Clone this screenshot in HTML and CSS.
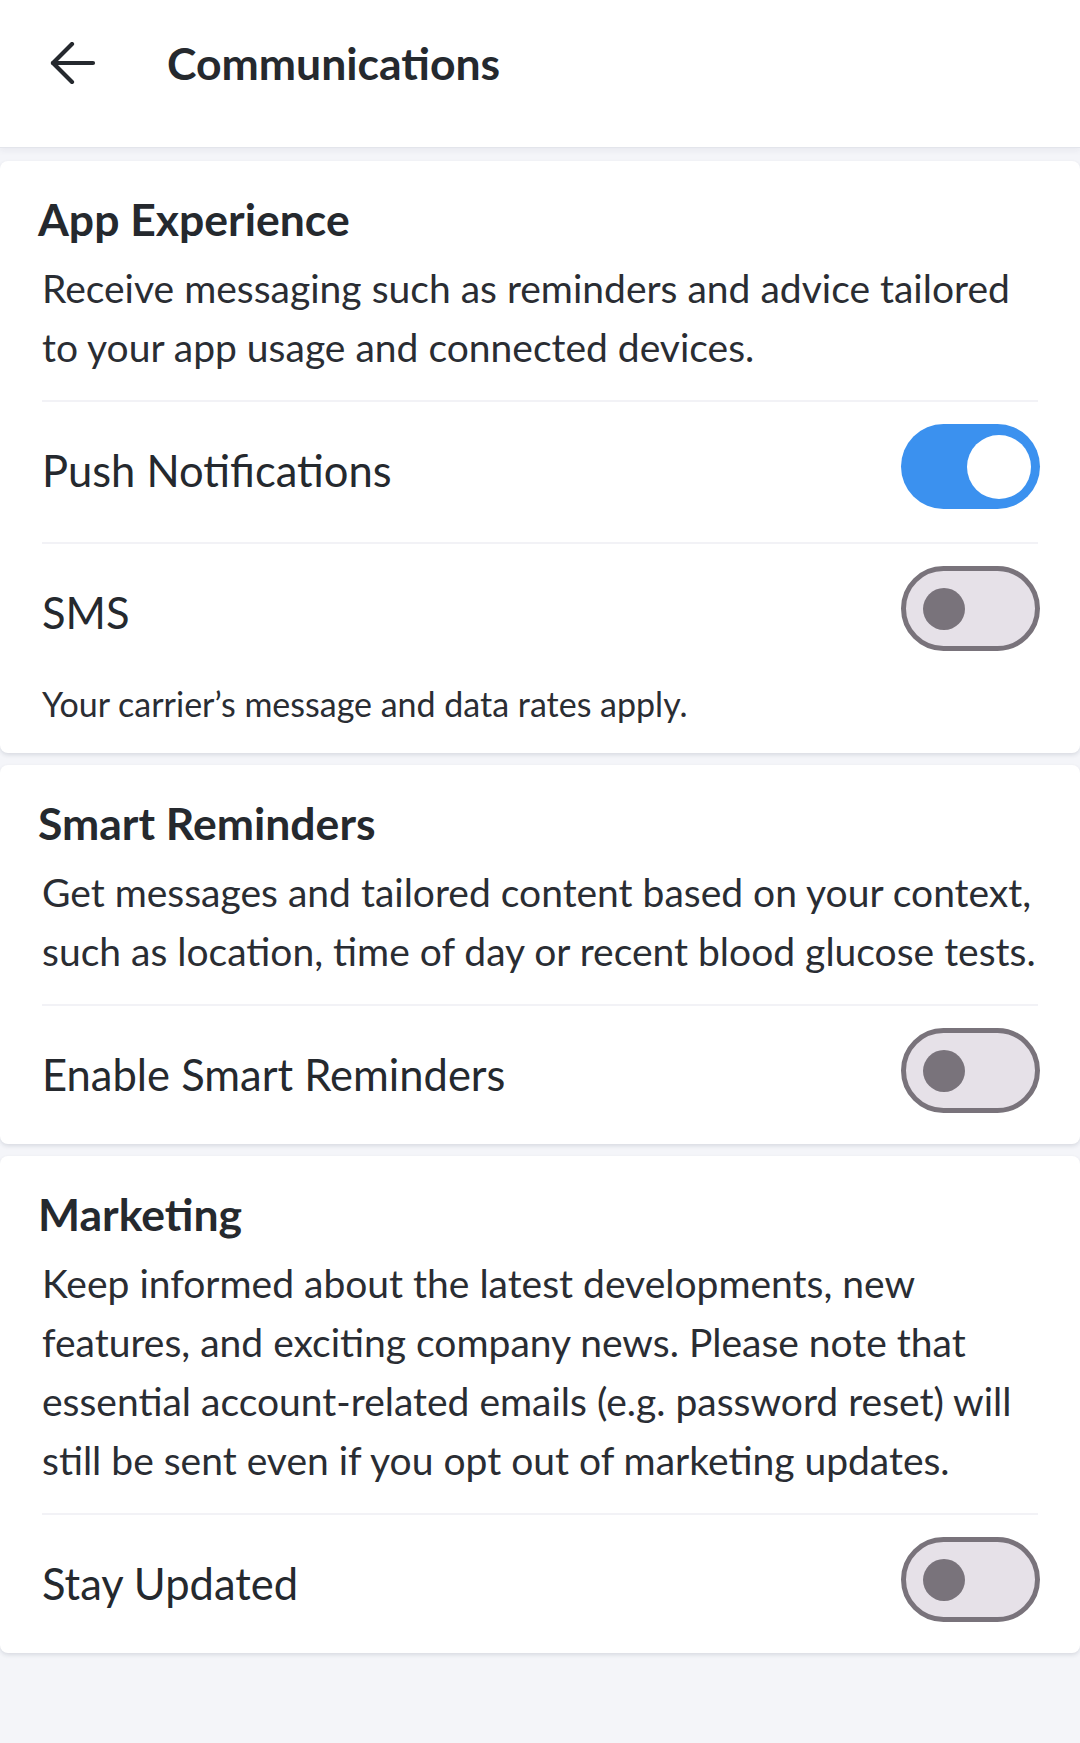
FILE: index.html
```html
<!DOCTYPE html>
<html lang="en">
<head>
<meta charset="utf-8">
<title>Communications</title>
<link rel="stylesheet" href="styles.css">
</head>
<body>
<header class="topbar">
  <button class="back" aria-label="Back">
    <svg width="46" height="42" viewBox="0 0 46 42" fill="none" stroke="currentColor" stroke-width="4.2" stroke-linecap="round" stroke-linejoin="round">
      <path d="M43 21H3"/>
      <path d="M22 2L3 21l19 19"/>
    </svg>
  </button>
  <h1 class="title">Communications</h1>
</header>
<main class="content">
  <section class="card">
    <h2 class="card-title">App Experience</h2>
    <p class="card-desc">Receive messaging such as reminders and advice tailored to your app usage and connected devices.</p>
    <div class="row">
      <span class="row-label">Push Notifications</span>
      <span class="toggle on"><span class="knob"></span></span>
    </div>
    <div class="row">
      <span class="row-label">SMS</span>
      <span class="toggle"><span class="knob"></span></span>
    </div>
    <p class="note">Your carrier’s message and data rates apply.</p>
  </section>
  <section class="card">
    <h2 class="card-title">Smart Reminders</h2>
    <p class="card-desc">Get messages and tailored content based on your context, such as location, time of day or recent blood glucose tests.</p>
    <div class="row last">
      <span class="row-label">Enable Smart Reminders</span>
      <span class="toggle"><span class="knob"></span></span>
    </div>
  </section>
  <section class="card">
    <h2 class="card-title">Marketing</h2>
    <p class="card-desc">Keep informed about the latest developments, new features, and exciting company news. Please note that essential account-related emails (e.g. password reset) will still be sent even if you opt out of marketing updates.</p>
    <div class="row last">
      <span class="row-label">Stay Updated</span>
      <span class="toggle"><span class="knob"></span></span>
    </div>
  </section>
</main>
</body>
</html>
```
FILE: styles.css
```css
* { box-sizing: border-box; }
html, body {
  margin: 0;
  padding: 0;
}
body {
  width: 1080px;
  min-height: 1743px;
  background: #f4f5f9;
  font-family: "Lato", "Open Sans", sans-serif;
  color: #25292e;
}
.topbar {
  height: 147px;
  background: #fff;
  display: flex;
  align-items: center;
  padding-left: 50px;
  box-shadow: 0 1px 0 #e3e5eb, 0 4px 6px rgba(30, 40, 70, 0.05);
  position: relative;
  z-index: 1;
}
.back {
  border: 0;
  background: none;
  padding: 0;
  margin: 0;
  width: 46px;
  height: 42px;
  color: #25292e;
  display: flex;
  margin-top: -22px;
}
.title {
  margin: 0 0 0 71px;
  font-size: 44.5px;
  font-weight: 700;
  line-height: 52px;
  margin-top: -22px;
}
.content {
  padding-top: 14px;
  display: flex;
  flex-direction: column;
  gap: 12px;
}
.card {
  background: #fff;
  border-radius: 8px;
  box-shadow: 0 2px 4px rgba(20, 30, 60, 0.12);
  padding: 32px 42px 0;
}
.card-title {
  margin: 0 0 0 -4px;
  font-size: 44.5px;
  font-weight: 700;
  line-height: 52px;
}
.card-desc {
  margin: 14px 0 23px;
  font-size: 39px;
  line-height: 59px;
  color: #2a2d33;
}
.row {
  border-top: 2px solid #f2f2f6;
  padding: 22px 0 33px;
  display: flex;
  align-items: center;
  justify-content: space-between;
}
.row.last {
  padding-bottom: 31px;
}
.row-label {
  font-size: 43.5px;
  line-height: 50px;
  color: #25292e;
  margin-top: 6px;
}
.toggle {
  width: 139px;
  height: 85px;
  border-radius: 43px;
  background: #e6e1e8;
  border: 5px solid #79737b;
  display: flex;
  align-items: center;
  padding-left: 17px;
  flex: none;
  margin-right: -2px;
}
.toggle .knob {
  width: 42px;
  height: 42px;
  border-radius: 50%;
  background: #79737b;
}
.toggle.on {
  background: #3b91ef;
  border: 0;
  justify-content: flex-end;
  padding: 0 9px 0 0;
}
.toggle.on .knob {
  width: 64px;
  height: 64px;
  background: #fff;
}
.note {
  margin: 0;
  padding-bottom: 29px;
  font-size: 34px;
  line-height: 40px;
  color: #2a2d33;
}
```
